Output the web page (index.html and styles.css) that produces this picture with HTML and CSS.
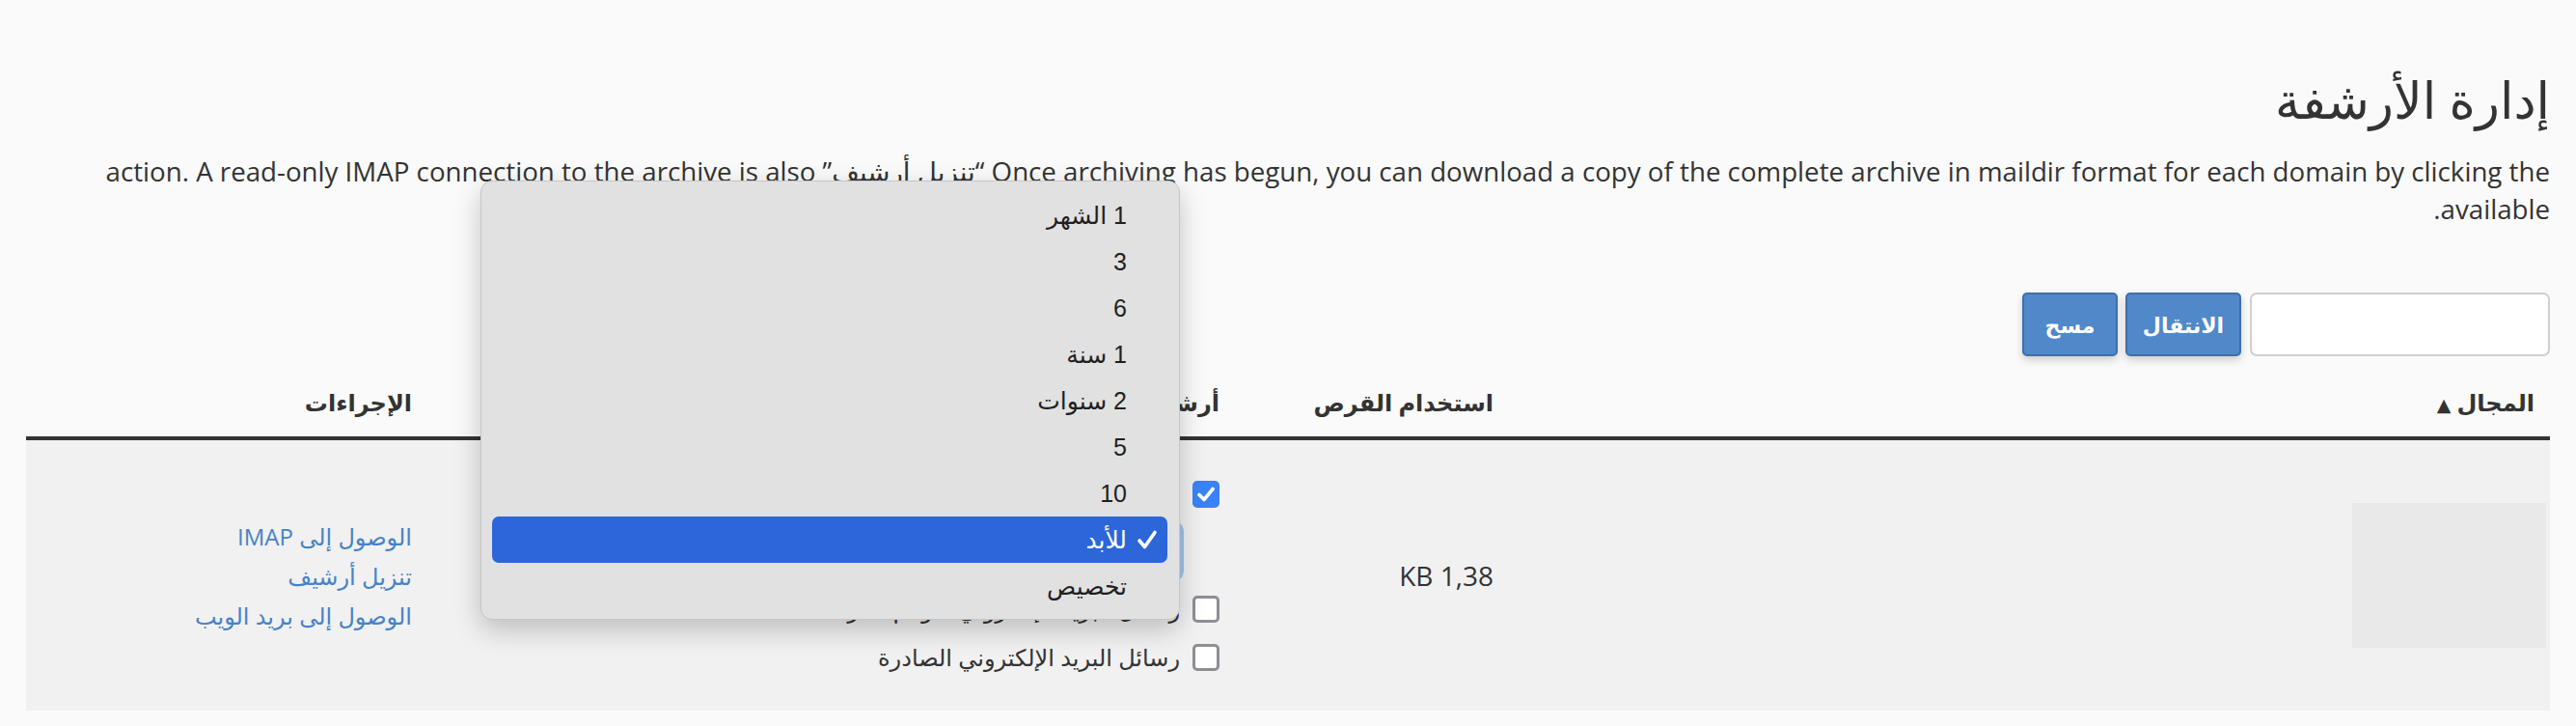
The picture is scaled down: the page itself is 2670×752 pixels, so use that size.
FILE: index.html
```html
<!DOCTYPE html>
<html lang="ar" dir="rtl">
<head>
<meta charset="utf-8">
<title>إدارة الأرشفة</title>
<link rel="stylesheet" href="styles.css">
</head>
<body>
<main class="page">
  <h1 class="title">إدارة الأرشفة</h1>
  <p class="desc">Once archiving has begun, you can download a copy of the complete archive in maildir format for each domain by clicking the “تنزيل أرشيف” action. A read-only IMAP connection to the archive is also available.</p>
  <div class="toolbar">
    <input class="search" type="text" aria-label="بحث">
    <button class="btn btn-go" type="button">الانتقال</button>
    <button class="btn btn-clear" type="button">مسح</button>
  </div>
  <div class="grid">
    <div class="thead">
      <div class="th th-domain">المجال <span class="sort">▲</span></div>
      <div class="th">استخدام القرص</div>
      <div class="th">أرشفة</div>
      <div class="th">الإجراءات</div>
    </div>
    <div class="trow">
      <div class="td td-domain"><div class="redact"></div></div>
      <div class="td td-disk">1,38 KB</div>
      <div class="td td-arch">
        <div class="opt"><span class="cb cb-on"><svg viewBox="0 0 28 28" width="28" height="28"><path d="M7 14.5 L12 19.5 L21 8.5" fill="none" stroke="#fff" stroke-width="3.6" stroke-linecap="round" stroke-linejoin="round"/></svg></span><span class="opt-label">رسائل البريد الإلكتروني الواردة</span></div>
        <div class="sel">للأبد</div>
        <div class="opt"><span class="cb"></span><span class="opt-label">رسائل البريد الإلكتروني لقوائم المراسلات</span></div>
        <div class="opt"><span class="cb"></span><span class="opt-label">رسائل البريد الإلكتروني الصادرة</span></div>
      </div>
      <div class="td td-act">
        <a class="act" href="#">الوصول إلى IMAP</a>
        <a class="act" href="#">تنزيل أرشيف</a>
        <a class="act" href="#">الوصول إلى بريد الويب</a>
      </div>
    </div>
  </div>
</main>
<div class="popup" role="listbox">
  <div class="item">1 الشهر</div>
  <div class="item">3</div>
  <div class="item">6</div>
  <div class="item">1 سنة</div>
  <div class="item">2 سنوات</div>
  <div class="item">5</div>
  <div class="item">10</div>
  <div class="item item-on"><svg class="tick" viewBox="0 0 22 22" width="22" height="22"><path d="M3 12 L8.5 18.5 L19 3.5" fill="none" stroke="#fff" stroke-width="3.6" stroke-linecap="round" stroke-linejoin="round"/></svg>للأبد</div>
  <div class="item">تخصيص</div>
</div>
</body>
</html>
```

FILE: styles.css
```css
* { box-sizing: border-box; }
html, body { margin: 0; padding: 0; }
body {
  width: 2670px;
  height: 752px;
  overflow: hidden;
  position: relative;
  background: #fafafa;
  color: #333;
  font-family: "Open Sans", "DejaVu Sans", sans-serif;
}
.page { padding: 0 27px; }
.title {
  margin: 0;
  padding-top: 68px;
  font-size: 52px;
  line-height: 70px;
  font-weight: normal;
  color: #333;
}
.desc {
  margin: 20px 0 0;
  font-size: 27.7px;
  line-height: 39px;
  color: #333;
}
.toolbar {
  margin-top: 67px;
  display: flex;
  height: 66px;
}
.search {
  width: 311px;
  height: 66px;
  border: 2px solid #cfcfcf;
  border-radius: 7px;
  background: #fff;
  margin: 0 0 0 9px;
  padding: 0 12px;
  font-size: 24px;
}
.btn {
  height: 66px;
  border: 2px solid #3f6fa9;
  border-radius: 5px;
  background: #5088c9;
  color: #fff;
  font-family: "Open Sans", "DejaVu Sans", sans-serif;
  font-size: 22px;
  font-weight: bold;
  padding: 0;
  box-shadow: 0 4px 9px rgba(0,0,0,0.18);
}
.btn-go { width: 120px; margin-left: 8px; }
.btn-clear { width: 99px; }
.grid { margin-top: 12px; }
.thead, .trow {
  display: grid;
  grid-template-columns: 1073px 284px 837px 422px;
  align-items: center;
}
.thead {
  height: 75px;
  border-bottom: 4px solid #333;
}
.th {
  padding-right: 22px;
  font-size: 24px;
  font-weight: bold;
  color: #333;
}
.th-domain { padding-right: 16px; }
.sort { font-size: 19px; }
.trow {
  height: 280px;
  background: #f1f1f1;
}
.td { padding-right: 22px; }
.td-domain { padding-right: 4px; }
.redact {
  width: 201px;
  height: 150px;
  background: #e9e9e9;
}
.td-disk { font-size: 28px; color: #333; }
.td-arch {
  display: flex;
  flex-direction: column;
  align-items: flex-start;
}
.opt {
  height: 50px;
  display: flex;
  align-items: center;
  gap: 13px;
  font-size: 24px;
  color: #333;
}
.cb {
  width: 28px;
  height: 28px;
  border-radius: 5px;
  border: 3px solid #8e8e96;
  background: #fff;
  flex: none;
  display: block;
}
.cb-on {
  border: none;
  background: #3a82f6;
}
.cb-on svg { display: block; }
.sel {
  width: 300px;
  height: 56px;
  margin: 6px 41px 7px 0;
  border-radius: 8px;
  background: #fff;
  border: 1px solid #bbb;
  box-shadow: 0 0 0 4px rgba(72, 140, 230, 0.45);
  font-size: 24px;
  line-height: 54px;
  padding-right: 14px;
}
.td-act { display: flex; flex-direction: column; align-items: flex-start; }
.act {
  font-size: 24px;
  line-height: 41px;
  color: #4683c6;
  text-decoration: none;
}
.popup {
  position: absolute;
  left: 498px;
  top: 187px;
  width: 725px;
  height: 455px;
  padding: 11px 12px 0 11px;
  background: #e1e1e1;
  border: 1px solid #c6c6c6;
  border-radius: 12px;
  box-shadow: 0 10px 28px rgba(0,0,0,0.22);
  font-family: "Liberation Sans", "DejaVu Sans", sans-serif;
  font-size: 25px;
  color: #1f1f1f;
}
.item {
  height: 48px;
  line-height: 48px;
  padding-right: 42px;
  position: relative;
  border-radius: 7px;
}
.item-on {
  background: #2c66d9;
  color: #fff;
}
.tick {
  position: absolute;
  right: 10px;
  top: 13px;
}
```
